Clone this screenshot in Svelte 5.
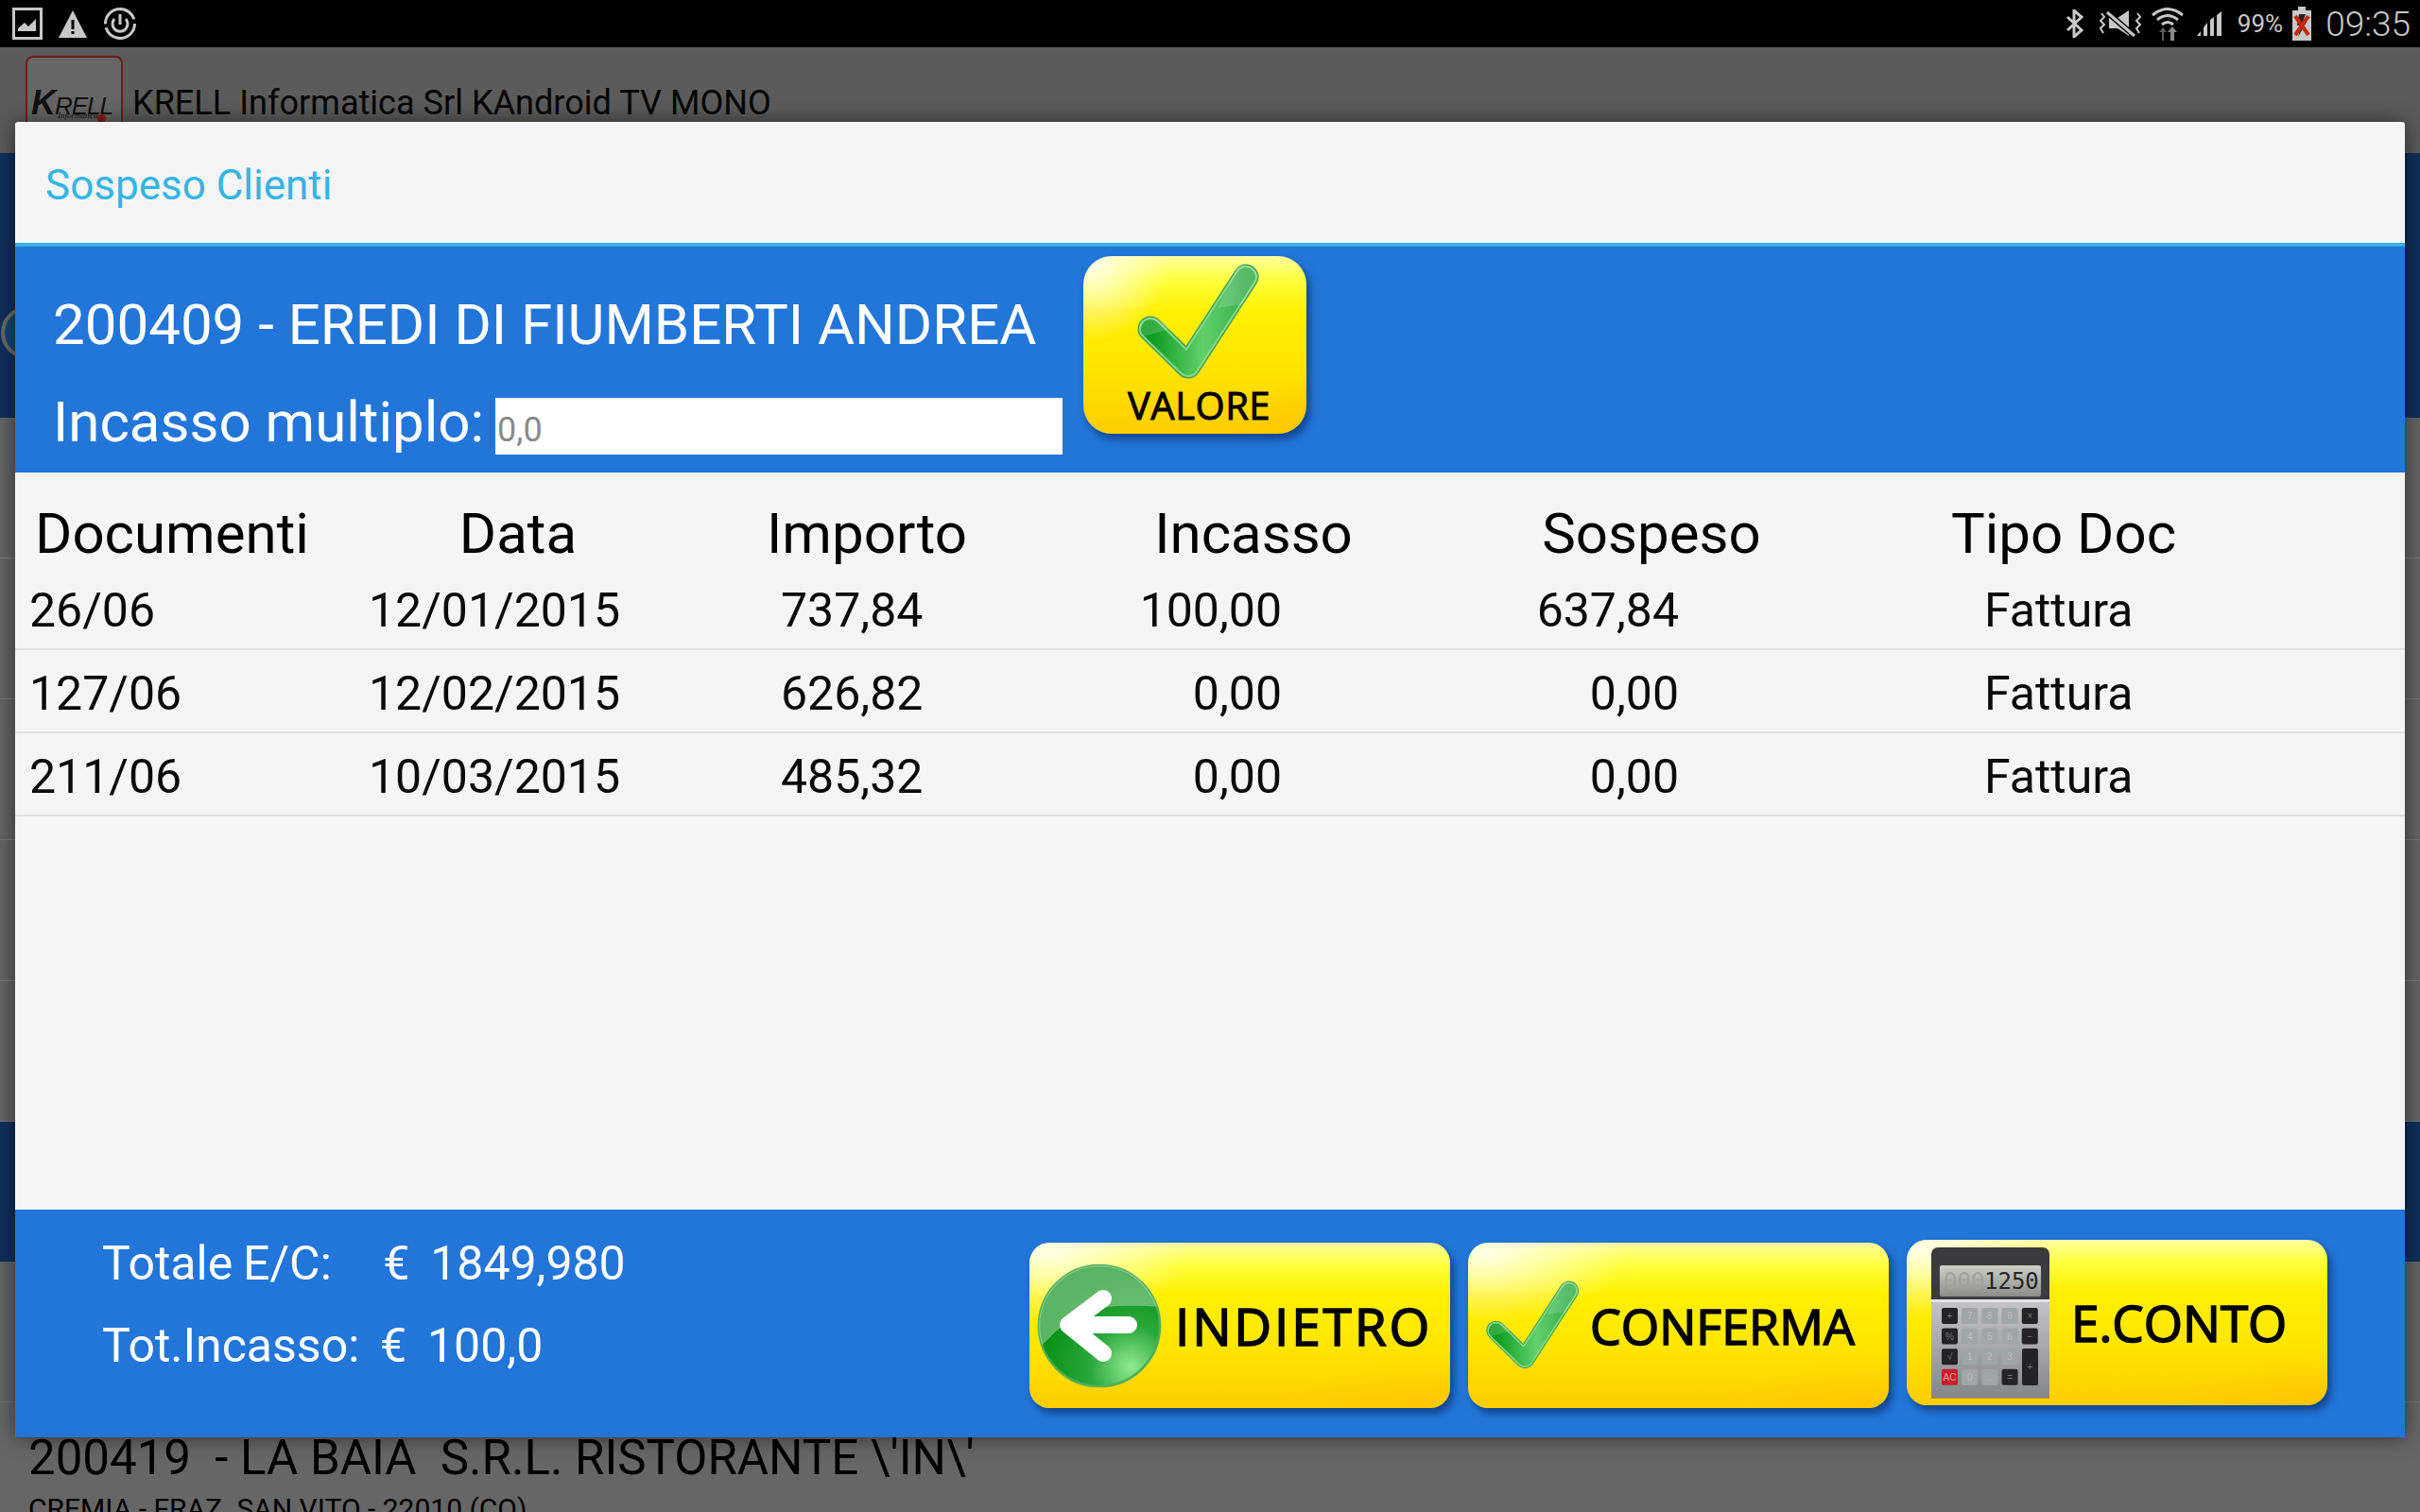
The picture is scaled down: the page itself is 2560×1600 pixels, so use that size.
<script>
  const columns = ["Documenti", "Data", "Importo", "Incasso", "Sospeso", "Tipo Doc"];
  const rows = [
    ["26/06", "12/01/2015", "737,84", "100,00", "637,84", "Fattura"],
    ["127/06", "12/02/2015", "626,82", "0,00", "0,00", "Fattura"],
    ["211/06", "10/03/2015", "485,32", "0,00", "0,00", "Fattura"]
  ];
  const keys = [
    ["+", 0, 0, "dark"], ["7", 1, 0, ""], ["8", 2, 0, ""], ["9", 3, 0, ""], ["×", 4, 0, "dark"],
    ["%", 0, 1, "dark"], ["4", 1, 1, ""], ["5", 2, 1, ""], ["6", 3, 1, ""], ["−", 4, 1, "dark"],
    ["√", 0, 2, "dark"], ["1", 1, 2, ""], ["2", 2, 2, ""], ["3", 3, 2, ""],
    ["AC", 0, 3, "red"], ["0", 1, 3, ""], [".", 2, 3, ""], ["=", 3, 3, "dark"]
  ];
</script>

{#snippet check(width, height)}
  <svg class="check" {width} {height} viewBox="0 0 132 127">
    <defs>
      <linearGradient id="checkFill" x1="0" y1="0.6" x2="1" y2="0.6">
        <stop offset="0" stop-color="#0b9a1c" />
        <stop offset="0.55" stop-color="#62d06c" />
        <stop offset="1" stop-color="#36ad4a" />
      </linearGradient>
    </defs>
    <path d="M15 70 L55 109 L116 15" fill="none" stroke="#4c9f55" stroke-width="27" stroke-linecap="round" stroke-linejoin="round" />
    <path d="M15 70 L55 109 L116 15" fill="none" stroke="#7fdc88" stroke-width="24" stroke-linecap="round" stroke-linejoin="round" />
    <path d="M15 70 L55 109 L116 15" fill="none" stroke="url(#checkFill)" stroke-width="20" stroke-linecap="round" stroke-linejoin="round" />
    <path d="M4 66 Q12 56 24 60 L36 70 L8 78 Z M86 48 L108 2 Q124 2 129 14 L112 44 Z" fill="#fff" opacity="0.16" />
  </svg>
{/snippet}

<div class="page">
  <div class="statusbar">
    <div class="status-left">
      <svg width="32" height="34" viewBox="0 0 32 34"><rect x="1.5" y="1.5" width="29" height="31" fill="none" stroke="#c8c8c8" stroke-width="3" /><path d="M6 25 L6 22 L13 16 L17 20 L25 12 L25 25 Z" fill="#c8c8c8" /></svg>
      <svg width="32" height="31" viewBox="0 0 32 31"><path d="M16 1 L31 30 L1 30 Z" fill="#c8c8c8" /><rect x="14.5" y="11" width="3" height="10" fill="#000" /><rect x="14.5" y="23" width="3" height="3" fill="#000" /></svg>
      <svg width="36" height="36" viewBox="0 0 36 36"><circle cx="18" cy="18" r="15.5" fill="none" stroke="#c8c8c8" stroke-width="3" stroke-dasharray="44 4 44 5" /><path d="M12 13 A8 8 0 1 0 24 13" fill="none" stroke="#c8c8c8" stroke-width="3" /><rect x="16.5" y="8" width="3" height="11" fill="#c8c8c8" /></svg>
    </div>
    <div class="status-right">
      <svg width="20" height="30" viewBox="0 0 20 30"><path d="M2 8 L17 22 L9 29 L9 1 L17 8 L2 22" fill="none" stroke="#c8c8c8" stroke-width="3" /></svg>
      <svg class="gap-mute" width="46" height="30" viewBox="0 0 46 30"><path d="M11 9 L20 9 L32 1 L32 28 L20 20 L11 20 Z" fill="#c8c8c8" /><path d="M9 3 L38 28" stroke="#000" stroke-width="6" /><path d="M9 3 L38 28" stroke="#c8c8c8" stroke-width="3" /><path d="M3 4 L6 8 L2 12 L6 16 L2 20 L5 25 M41 4 L44 8 L40 12 L44 16 L40 20 L43 25" fill="none" stroke="#c8c8c8" stroke-width="2" /></svg>
      <svg width="34" height="36" viewBox="0 0 34 36"><path d="M1 9 Q17 -4 33 9 M6 14 Q17 5 28 14 M11 19 Q17 14 23 19" fill="none" stroke="#c8c8c8" stroke-width="3" /><path d="M11 36 L11 27 L8 27 L12 22 L16 27 L13 27 L13 36 Z" fill="#5a5a5a" /><path d="M20 36 L20 27 L17 27 L22 21 L27 27 L24 27 L24 36 Z" fill="#8a8a8a" /></svg>
      <svg class="gap-signal" width="27" height="26" viewBox="0 0 27 26"><path d="M0 26 L4 21 L4 26 Z M7 26 L7 17 L11 12 L11 26 Z M14 26 L14 9 L18 6 L18 26 Z M21 26 L21 4 L26 0 L26 26 Z" fill="#c8c8c8" /></svg>
      <span class="pct">99%</span>
      <svg width="20" height="36" viewBox="0 0 20 36"><rect x="6" y="0" width="8" height="4" fill="#c8c8c8" /><rect x="0" y="4" width="20" height="32" fill="#c8c8c8" /><path d="M7 8 L14 8 L11 16 L15 16 L6 32 L9 20 L5 20 Z" fill="#222" /><path d="M3 10 L17 30 M17 10 L3 30" stroke="#c8260c" stroke-width="4" /></svg>
      <span class="clock">09:35</span>
    </div>
  </div>

  <div class="appbar">
    <div class="logo">
      <span class="logo-name"><b>K</b>RELL</span>
      <span class="logo-sub">Informatica</span>
      <i class="logo-dot"></i>
    </div>
    <span class="app-title">KRELL Informatica Srl KAndroid TV MONO</span>
  </div>

  <div class="band band-top"><i class="ring"></i></div>
  <div class="bg-row"></div>
  <div class="bg-row"></div>
  <div class="bg-row"></div>
  <div class="bg-row"></div>
  <div class="bg-row"></div>
  <div class="band band-bottom"></div>
  <div class="bg-row"></div>
  <div class="bg-last">
    <div class="bg-name">200419  - LA BAIA  S.R.L. RISTORANTE \'IN\'</div>
    <div class="bg-addr">CREMIA - FRAZ. SAN VITO - 22010 (CO)</div>
  </div>

  <div class="dialog">
    <div class="title">Sospeso Clienti</div>

    <div class="head">
      <div class="head-left">
        <div class="customer">200409 - EREDI DI FIUMBERTI ANDREA</div>
        <div class="incasso">
          <label for="multi">Incasso multiplo:</label>
          <input id="multi" placeholder="0,0" />
        </div>
      </div>
      <button class="yellow valore">
        {@render check(132, 127)}
        <span>VALORE</span>
      </button>
    </div>

    <div class="table">
      <div class="thead">
        {#each columns as col}
          <div>{col}</div>
        {/each}
      </div>
      {#each rows as row}
        <div class="trow">
          {#each row as cell}
            <div>{cell}</div>
          {/each}
        </div>
      {/each}
    </div>

    <div class="footer">
      <div class="totals">
        <div>Totale E/C:     €  1849,980</div>
        <div>Tot.Incasso:  €  100,0</div>
      </div>
      <div class="actions">
        <button class="yellow action">
          <svg class="back" width="132" height="132" viewBox="0 0 132 132">
            <defs>
              <radialGradient id="backFill" cx="0.76" cy="0.84" r="0.75">
                <stop offset="0" stop-color="#92ea92" />
                <stop offset="0.45" stop-color="#2aa83a" />
                <stop offset="1" stop-color="#058f14" />
              </radialGradient>
              <clipPath id="backClip"><circle cx="66" cy="66" r="64" /></clipPath>
            </defs>
            <circle cx="66" cy="66" r="64" fill="url(#backFill)" stroke="#4fae5c" stroke-width="2.5" />
            <path d="M0 0 H132 V46 Q80 42 52 50 Q30 60 8 84 L0 90 Z" fill="#fff" opacity="0.34" clip-path="url(#backClip)" />
            <path d="M70 37 L33 65 L70 95 M36 65 L97 65" fill="none" stroke="#fff" stroke-width="18" stroke-linecap="round" stroke-linejoin="round" />
          </svg>
          <span class="indietro">INDIETRO</span>
        </button>
        <button class="yellow action">
          <span class="conf-icon">{@render check(101, 98)}</span>
          <span class="conferma">CONFERMA</span>
        </button>
        <button class="yellow action raised">
          <svg class="calc" width="125" height="160" viewBox="0 0 125 160">
            <defs>
              <linearGradient id="calcBody" x1="0" y1="0" x2="0" y2="1">
                <stop offset="0" stop-color="#c4c4ca" />
                <stop offset="1" stop-color="#85868a" />
              </linearGradient>
              <linearGradient id="calcScreen" x1="0" y1="0" x2="0" y2="1">
                <stop offset="0" stop-color="#cfcfca" />
                <stop offset="1" stop-color="#8c8c88" />
              </linearGradient>
            </defs>
            <path d="M-5 148 Q0 156 10 158 H115 Q125 156 130 148 L128 160 H-3 Z" fill="#7a6a10" opacity="0.6" />
            <rect x="0" y="0" width="125" height="159" rx="7" fill="#3b3b3d" />
            <rect x="0" y="56" width="125" height="103" rx="4" fill="url(#calcBody)" />
            <rect x="0" y="55" width="125" height="3" fill="#e4e4e8" />
            <rect x="9" y="19" width="107" height="33" rx="2" fill="url(#calcScreen)" />
            <text class="calc-ghost" x="13" y="44">000</text>
            <text class="calc-num" x="56" y="44">1250</text>
            {#each keys as [label, col, row, kind]}
              <rect x={11 + col * 21.2} y={64 + row * 21.6} width="17" height="17" rx="2" class={"key " + kind} />
              <text x={19.5 + col * 21.2} y={76 + row * 21.6} class={"key-text " + kind}>{label}</text>
            {/each}
            <rect x="96" y="107" width="17" height="39" rx="2" class="key dark" />
            <text x="104.5" y="130" class="key-text dark">+</text>
          </svg>
          <span class="econto">E.CONTO</span>
        </button>
      </div>
    </div>
  </div>
</div>

<style>
  :global(body) {
    margin: 0;
    background: #000;
    font-family: Roboto, "Liberation Sans", sans-serif;
  }

  .page {
    position: relative;
    width: 2560px;
    height: 1600px;
    overflow: hidden;
    background: #666;
  }

  .statusbar {
    height: 50px;
    background: #000;
    display: flex;
    justify-content: space-between;
    align-items: center;
    color: #c8c8c8;
  }
  .status-left {
    display: flex;
    align-items: center;
    gap: 16px;
    padding-left: 13px;
  }
  .status-right {
    display: flex;
    align-items: center;
    gap: 10px;
    padding-right: 10px;
  }
  .gap-mute { margin-left: 5px; }
  .gap-signal { margin-left: 4px; }
  .pct { font-size: 26px; margin-left: 6px; }
  .clock { font-size: 37px; font-weight: 300; margin-left: 5px; }

  .appbar {
    height: 112px;
    background: #5b5b5b;
    display: flex;
    align-items: flex-start;
    padding-left: 27px;
  }
  .logo {
    position: relative;
    width: 99px;
    height: 90px;
    margin-top: 9px;
    border: 2px solid #6e1c1c;
    border-radius: 8px;
    background: #666;
  }
  .logo-name {
    position: absolute;
    left: 4px;
    top: 27px;
    font: italic 26px "Liberation Sans", sans-serif;
    letter-spacing: -1px;
    color: #111;
  }
  .logo-name b { font-size: 36px; }
  .logo-sub {
    position: absolute;
    left: 32px;
    top: 56px;
    font: italic 9px "Liberation Serif", serif;
    color: #111;
  }
  .logo-dot {
    position: absolute;
    left: 74px;
    top: 60px;
    width: 9px;
    height: 9px;
    border-radius: 50%;
    background: #8a1c1c;
  }
  .app-title {
    margin: 36px 0 0 10px;
    font-size: 36.1px;
    line-height: 46px;
    color: #050505;
    white-space: nowrap;
  }

  .band { background: #0e2f5c; }
  .band-top { position: relative; height: 280px; }
  .band-bottom { height: 148px; }
  .ring {
    position: absolute;
    left: 1px;
    top: 162px;
    width: 56px;
    height: 56px;
    border-radius: 50%;
    border: 4px solid #6b6b60;
    box-sizing: border-box;
    background: #0e4a6e;
  }
  .bg-row {
    height: 149px;
    box-sizing: border-box;
    background: #646464;
    border-bottom: 1px solid #777;
  }
  .bg-last {
    padding: 29px 0 0 30px;
    background: #666;
    color: #000;
  }
  .bg-name { font-size: 51px; line-height: 60px; white-space: pre; }
  .bg-addr { font-size: 30px; line-height: 40px; margin-top: 4px; white-space: pre; }

  .dialog {
    position: absolute;
    left: 16px;
    top: 129px;
    width: 2528px;
    height: 1392px;
    display: flex;
    flex-direction: column;
    background: #f5f5f5;
    border-radius: 3px 3px 0 0;
    box-shadow: 0 0 22px rgba(0, 0, 0, 0.55);
  }
  .title {
    height: 128px;
    box-sizing: border-box;
    display: flex;
    align-items: center;
    padding: 6px 0 0 32px;
    font-size: 44px;
    color: #33b5e5;
  }

  .head {
    height: 239px;
    border-top: 4px solid #33b5e5;
    background: #2276d9;
    display: flex;
    align-items: flex-start;
    color: #fff;
  }
  .head-left {
    width: 1130px;
    flex: none;
    padding: 16px 0 0 40px;
    box-sizing: border-box;
  }
  .customer {
    height: 100px;
    display: flex;
    align-items: center;
    padding-top: 33px;
    box-sizing: border-box;
    font-size: 60px;
    white-space: nowrap;
  }
  .incasso {
    display: flex;
    align-items: center;
    height: 80px;
    margin-top: 29px;
  }
  .incasso label {
    font-size: 60px;
    white-space: nowrap;
    margin-right: 12px;
  }
  .incasso input {
    width: 600px;
    height: 60px;
    box-sizing: border-box;
    margin-top: 10px;
    padding: 8px 0 0 2px;
    border: 0;
    outline: 0;
    background: #fff;
    font: 36px Roboto, sans-serif;
  }
  .incasso input::placeholder { color: #8a8a8a; opacity: 1; }

  .yellow {
    position: relative;
    border: 0;
    padding: 0;
    color: #000;
    background:
      radial-gradient(ellipse 34% 42% at 4% 6%, rgba(255, 255, 235, 0.95), rgba(255, 255, 200, 0) 100%),
      radial-gradient(ellipse 40% 30% at 100% 100%, rgba(255, 190, 0, 0.55), rgba(255, 200, 0, 0) 100%),
      linear-gradient(#ffff9c 0%, #ffff3a 14%, #fff000 32%, #ffe600 62%, #ffd000 95%);
    box-shadow: 4px 6px 8px rgba(5, 30, 80, 0.55);
    font-family: "Open Sans", sans-serif;
    -webkit-text-stroke: 1.6px #000;
  }
  .valore {
    width: 236px;
    height: 188px;
    margin-top: 10px;
    border-radius: 30px;
    display: block;
  }
  .valore .check {
    position: absolute;
    left: 56px;
    top: 7px;
  }
  .valore span {
    position: absolute;
    left: 47px;
    top: 133px;
    font-size: 40px;
    line-height: 50px;
    font-weight: 400;
    letter-spacing: 0.5px;
    white-space: nowrap;
    -webkit-text-stroke: 1px #000;
  }

  .table { flex: 1; }
  .thead, .trow {
    display: grid;
    grid-template-columns: 340px 384px 354px 464px 378px 494px 114px;
    color: #000;
  }
  .thead {
    height: 100px;
    align-items: center;
    padding-top: 29px;
    box-sizing: border-box;
    font-size: 60px;
    text-align: center;
  }
  .thead > div:first-child {
    text-align: left;
    padding-left: 21px;
  }
  .trow {
    height: 88px;
    box-sizing: border-box;
    padding-top: 5px;
    border-bottom: 2px solid #e2e2e2;
    align-items: center;
    font-size: 50px;
    color: #0a0a0a;
  }
  .trow:first-of-type { height: 88px; }
  .trow > div:nth-child(1) { padding-left: 15px; }
  .trow > div:nth-child(2) { padding-left: 34px; }
  .trow > div:nth-child(3) { padding-left: 86px; }
  .trow > div:nth-child(4) { text-align: right; padding-right: 202px; }
  .trow > div:nth-child(5) { text-align: right; padding-right: 160px; }
  .trow > div:nth-child(6) { padding-left: 163px; }

  .footer {
    height: 241px;
    box-sizing: border-box;
    background: #2276d9;
    display: flex;
    justify-content: space-between;
    align-items: flex-start;
    padding: 35px 82px 0 92px;
  }
  .totals {
    color: #fff;
    font-size: 50px;
    line-height: 87px;
    margin-top: -21px;
  }
  .totals div { white-space: pre; word-spacing: -1.5px; }
  .actions {
    display: flex;
    align-items: flex-start;
    gap: 19px;
  }
  .action {
    width: 445px;
    height: 175px;
    border-radius: 21px;
    display: flex;
    align-items: center;
    white-space: nowrap;
    font-size: 55px;
    line-height: 60px;
  }
  .raised { margin-top: -3px; }
  .back { margin-left: 8px; flex: none; }
  .indietro { margin-left: 14px; letter-spacing: 2.8px; }
  .conf-icon { display: flex; margin: 0 0 0 18px; }
  .conferma { margin-left: 10px; font-size: 52px; }
  .calc { margin-left: 26px; flex: none; }
  .econto { margin-left: 23px; font-size: 53px; }

  .calc-ghost, .calc-num {
    font: 24px "DejaVu Sans Mono", monospace;
    -webkit-text-stroke: 0;
    stroke: none;
  }
  .calc-ghost { fill: #a2a29e; }
  .calc-num { fill: #262626; }
  .key { fill: #9ea7a6; }
  .key.dark { fill: #232325; }
  .key.red { fill: #c5202b; }
  .key-text {
    font: 10px "Liberation Sans", sans-serif;
    text-anchor: middle;
    fill: #b9bfbe;
    -webkit-text-stroke: 0;
    stroke: none;
  }
  .key-text.dark { fill: #777; }
  .key-text.red { fill: #e8a0a0; }
</style>
